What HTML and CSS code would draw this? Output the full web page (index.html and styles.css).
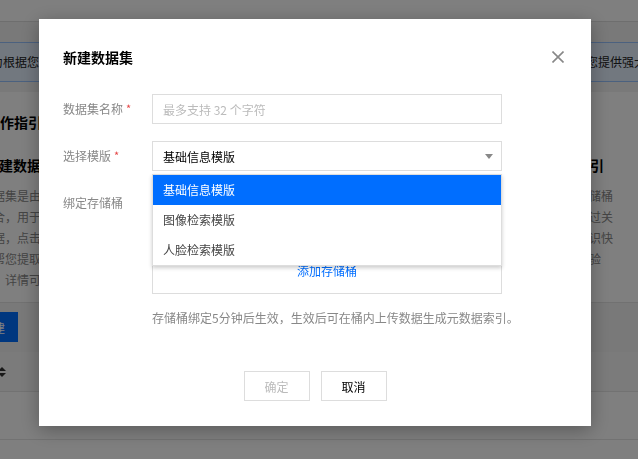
FILE: index.html
```html
<!DOCTYPE html>
<html lang="zh-CN">
<head>
<meta charset="utf-8">
<title>新建数据集</title>
<link rel="stylesheet" href="styles.css">
</head>
<body>
<div class="page">
  <header class="topbar"></header>
  <main class="content">
    <div class="inner">
      <div class="tip">
        <span class="tip-l">为根据您的业务场景，结合腾讯云数据万象的智能分析能力，帮助您快速构建数据集与元数据索引体系，数据万象为</span>
        <span class="tip-r">您提供强大的数据检索能力</span>
      </div>
      <section class="card">
        <h2 class="card-title">操作指引</h2>
        <div class="cols">
          <div class="col col-left">
            <h3 class="sub">创建数据集</h3>
            <div class="para">
              <p>数据集是由一组结构化的元数据组成的集合</p>
              <p>集合，用于统一管理存储桶中的数据文件</p>
              <p>数据，点击新建数据集按钮即可完成创建</p>
              <p>为帮您提取文件中的关键信息并建立索引</p>
              <p>的，详情可参考数据万象产品文档说明</p>
            </div>
          </div>
          <div class="col col-right">
            <h3 class="sub sub-r">快速构建数据集并生成元数据的索引</h3>
            <div class="para">
              <p>数据集可以绑定一个或多个对象存储的存储桶</p>
              <p>，系统将自动为数据建立元数据索引，通过关</p>
              <p>键词、标签等方式帮助您对海量数据的知识快</p>
              <p>速进行精准定位，为您带来高效便捷的体验</p>
            </div>
          </div>
        </div>
      </section>
      <div class="toolbar"><button class="btn-primary" type="button">新建</button></div>
      <div class="table">
        <div class="thead">
          <span class="th">ID</span>
          <svg class="sort" width="8" height="10" viewBox="0 0 8 10"><path d="M4 0 L8 4 H0 Z M4 10 L0 6 H8 Z" fill="#333"/></svg>
        </div>
        <div class="trow"></div>
        <div class="trow"></div>
      </div>
    </div>
  </main>
</div>

<div class="mask">
  <div class="dialog">
    <h1 class="dialog-title">新建数据集</h1>
    <svg class="close" width="12" height="12" viewBox="0 0 12 12"><path d="M0.5 0.5 L11.5 11.5 M11.5 0.5 L0.5 11.5" stroke="#888" stroke-width="1.6" fill="none"/></svg>
    <div class="form">
      <div class="row">
        <label class="label">数据集名称<span class="req">*</span></label>
        <input class="input" type="text" placeholder="最多支持 32 个字符">
      </div>
      <div class="row">
        <label class="label">选择模版<span class="req">*</span></label>
        <div class="select">
          <div class="select-box">
            <span class="select-text">基础信息模版</span>
            <svg class="arrow" width="8" height="5" viewBox="0 0 8 5"><path d="M0 0 H8 L4 5 Z" fill="#888"/></svg>
          </div>
          <ul class="menu">
            <li class="item active">基础信息模版</li>
            <li class="item">图像检索模版</li>
            <li class="item">人脸检索模版</li>
          </ul>
        </div>
      </div>
      <div class="row row-last">
        <label class="label">绑定存储桶</label>
        <div class="bucket"><a class="link" href="#">添加存储桶</a></div>
      </div>
      <p class="hint">存储桶绑定5分钟后生效，生效后可在桶内上传数据生成元数据索引。</p>
    </div>
    <div class="footer">
      <button class="btn btn-disabled" type="button">确定</button>
      <button class="btn" type="button">取消</button>
    </div>
  </div>
</div>
</body>
</html>
```

FILE: styles.css
```css
* { box-sizing: border-box; }
html, body { margin: 0; padding: 0; }
body {
  width: 638px;
  height: 459px;
  overflow: hidden;
  font-family: "Noto Sans CJK SC", "Noto Sans", sans-serif;
  font-size: 12px;
  color: #333;
  background: #f2f2f2;
}
h1, h2, h3, p, ul { margin: 0; padding: 0; }
ul { list-style: none; }

/* background page */
.page { width: 638px; height: 459px; overflow: hidden; background: #f2f2f2; }
.topbar { height: 22px; background: #fff; border-bottom: 1px solid #ddd; }
.content { padding-top: 20px; }
.inner { width: 700px; margin-left: -19px; }
.tip {
  display: flex;
  height: 40px;
  align-items: center;
  padding-left: 9px;
  background: #e5f0ff;
  border: 1px solid #97c2ff;
  white-space: nowrap;
  overflow: hidden;
  color: #222;
  line-height: 18px;
}
.tip-l { flex: none; width: 595px; overflow: hidden; }
.tip-r { flex: none; }
.card {
  margin-top: 10px;
  height: 211px;
  background: #fff;
  padding-top: 20px;
  border-bottom: 1px solid #e2e2e2;
}
.card-title { font-size: 14px; font-weight: bold; line-height: 20px; color: #000; padding-left: 5px; white-space: nowrap; }
.cols { display: flex; gap: 12px; margin-top: 23px; }
.col { flex: none; overflow: hidden; white-space: nowrap; }
.col-left { width: 380px; }
.col-right { width: 240px; }
.sub { font-size: 14px; font-weight: bold; line-height: 20px; color: #000; padding-left: 4px; }
.sub-r { padding-left: 7px; }
.para { margin-top: 10px; color: #888; line-height: 21px; }
.toolbar { padding: 9px 0 10px; }
.btn-primary {
  display: block;
  height: 30px;
  margin-left: -13px;
  padding: 0 13px;
  border: 0;
  background: #006eff;
  color: #fff;
  font: inherit;
}
.table { background: #fff; }
.thead {
  display: flex;
  align-items: center;
  height: 40px;
  background: #f7f7f7;
  border-bottom: 1px solid #e5e5e5;
  color: #888;
}
.th { line-height: 20px; }
.sort { margin-left: 5px; }
.trow { height: 48px; border-bottom: 1px solid #e5e5e5; background: #fff; }

/* modal */
.mask {
  position: fixed;
  inset: 0;
  background: rgba(0, 0, 0, 0.5);
  display: flex;
  justify-content: center;
  align-items: flex-start;
  padding: 19px 8px 0 0;
}
.dialog {
  position: relative;
  width: 552px;
  height: 407px;
  background: #fff;
  padding: 28px 24px 25px;
  box-shadow: 0 4px 18px rgba(0, 0, 0, 0.3);
}
.dialog-title { font-size: 14px; font-weight: bold; line-height: 20px; color: #000; }
.close { position: absolute; top: 32px; right: 27px; }
.form { margin-top: 27px; }
.row { display: flex; margin-bottom: 17px; }
.row-last { margin-bottom: 0; }
.label { flex: none; width: 89px; line-height: 30px; color: #888; }
.req { color: #e54545; margin-left: 3px; font-size: 11px; position: relative; top: -1px; }
.input {
  width: 350px;
  height: 30px;
  border: 1px solid #ddd;
  padding: 0 10px;
  font: inherit;
  color: #000;
  outline: none;
}
.input::placeholder { color: #bbb; }
.select { position: relative; width: 350px; }
.select-box {
  display: flex;
  align-items: center;
  justify-content: space-between;
  height: 30px;
  border: 1px solid #ddd;
  padding: 0 8px 0 10px;
  color: #000;
}
.arrow { flex: none; }
.menu {
  position: absolute;
  top: 33px;
  left: 0;
  width: 350px;
  background: #fff;
  border: 1px solid #ddd;
  box-shadow: 0 2px 4px rgba(0, 0, 0, 0.2);
  z-index: 2;
}
.item { height: 30px; line-height: 30px; padding: 0 10px; color: #444; }
.item.active { background: #006eff; color: #fff; }
.bucket {
  width: 350px;
  height: 106px;
  border: 1px solid #ddd;
  display: flex;
  flex-direction: column;
  justify-content: flex-end;
  align-items: center;
  padding-bottom: 12px;
}
.link { color: #006eff; text-decoration: none; line-height: 20px; }
.hint { margin-top: 16px; padding-left: 89px; line-height: 16px; color: #888; }
.footer { display: flex; justify-content: center; gap: 11px; margin-top: 45px; }
.btn {
  width: 66px;
  height: 30px;
  border: 1px solid #ddd;
  background: #fff;
  color: #000;
  font: inherit;
  padding: 0;
}
.btn-disabled { color: #bbb; }
```
